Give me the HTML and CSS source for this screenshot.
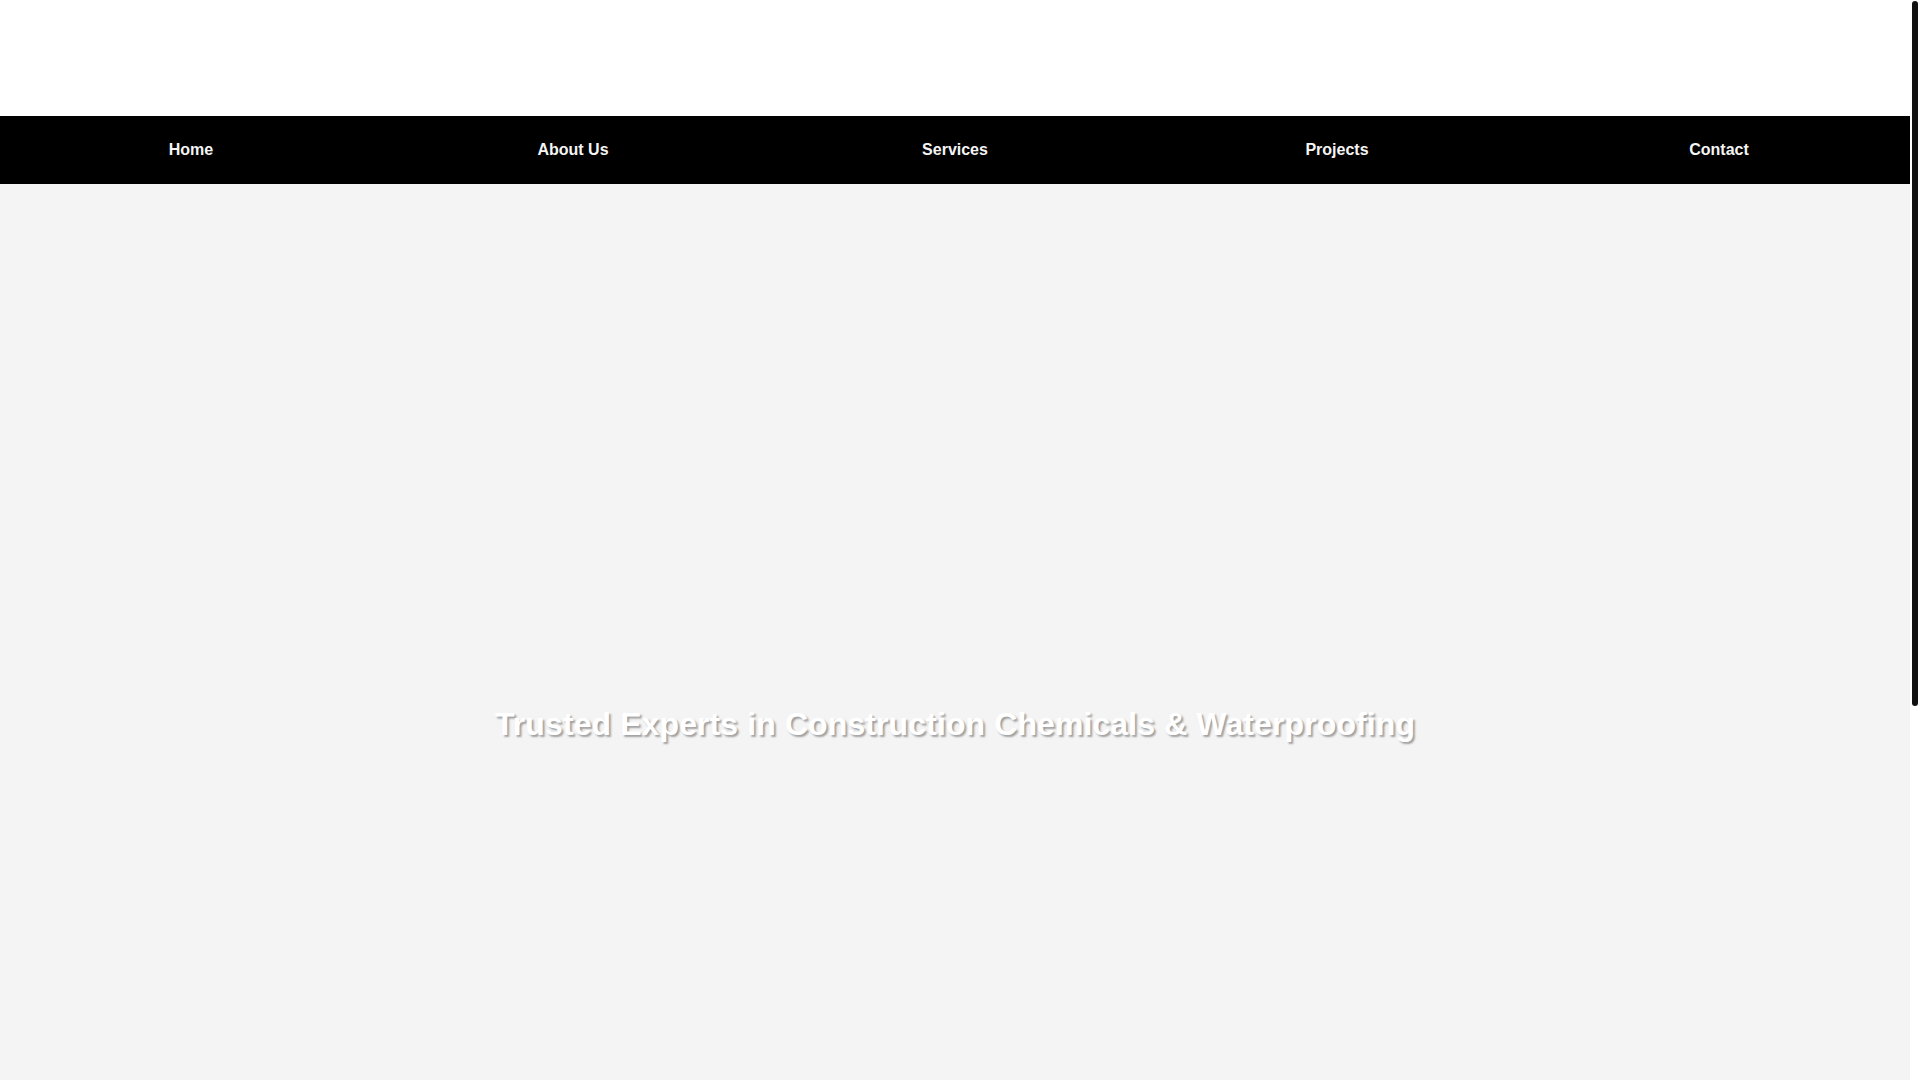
FILE: index.html
```html
<!DOCTYPE html>
<html lang="en">
<head>
<meta charset="utf-8">
<title>Trusted Experts in Construction Chemicals &amp; Waterproofing</title>
<link rel="stylesheet" href="styles.css">
</head>
<body>
<div class="page">
  <header class="site-header">
    <div class="logo-area"></div>
  </header>
  <nav class="main-nav">
    <a class="nav-item" href="#">Home</a>
    <a class="nav-item" href="#">About Us</a>
    <a class="nav-item" href="#">Services</a>
    <a class="nav-item" href="#">Projects</a>
    <a class="nav-item" href="#">Contact</a>
  </nav>
  <section class="hero">
    <h1 class="hero-title">Trusted Experts in Construction Chemicals &amp; Waterproofing</h1>
  </section>
  <section class="after-hero"></section>
</div>
<div class="fake-scrollbar" aria-hidden="true"><div class="fake-thumb"></div></div>
</body>
</html>
```

FILE: styles.css
```css
html {
  background: #ffffff;
  scrollbar-width: none;
}
::-webkit-scrollbar {
  width: 0;
  height: 0;
}
body {
  margin: 0;
  font-family: "Liberation Sans", Arial, sans-serif;
  background: #ffffff;
}
.page {
  width: calc(100% - 10px);
  background: #f4f4f4;
}
.site-header {
  height: 116px;
  background: #ffffff;
}
.main-nav {
  display: flex;
  height: 68px;
  background: #000000;
}
.nav-item {
  flex: 1;
  display: flex;
  align-items: center;
  justify-content: center;
  color: #f5f5f5;
  text-decoration: none;
  font-weight: bold;
  font-size: 16px;
}
.hero {
  height: 1080px;
  display: flex;
  align-items: center;
  justify-content: center;
  background: #f4f4f4;
}
.hero-title {
  margin: 0;
  color: #ffffff;
  font-size: 32px;
  font-weight: bold;
  letter-spacing: 0.1px;
  text-shadow: 2px 2px 2px rgba(0, 0, 0, 0.35);
}
.after-hero {
  height: 388px;
  background: #f4f4f4;
}
.fake-scrollbar {
  position: fixed;
  top: 0;
  right: 0;
  width: 10px;
  height: 100vh;
  background: #ffffff;
  padding: 1px 2px 0;
  box-sizing: border-box;
}
.fake-thumb {
  height: 705px;
  background: #111111;
  border-radius: 3px;
}
```
